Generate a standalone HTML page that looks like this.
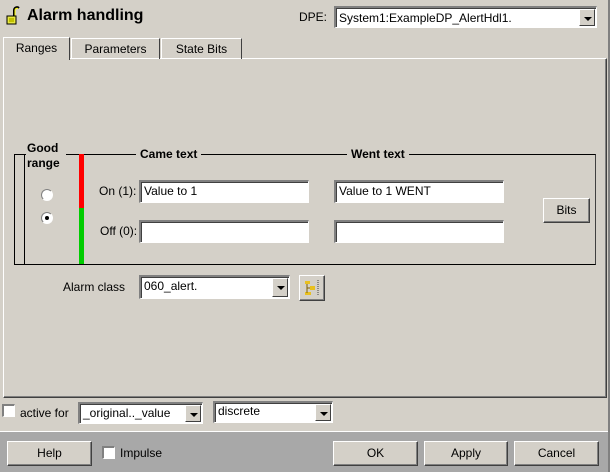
<!DOCTYPE html>
<html><head><style>
*{box-sizing:border-box}
body{margin:0;width:610px;height:472px;background:#d4d0c8;font-family:"Liberation Sans",sans-serif;font-size:12px;position:relative;overflow:hidden;color:#000}
.a{position:absolute}
.sunk{position:absolute;background:#fff;border-top:2px solid #808080;border-left:2px solid #808080;border-right:1px solid #fff;border-bottom:1px solid #fff;box-shadow:inset 1px 1px 0 #404040;padding:2px 3px;white-space:nowrap;overflow:hidden;font-size:12px}
.btn{position:absolute;background:#d4d0c8;border:1px solid;border-color:#fff #404040 #404040 #fff;box-shadow:inset -1px -1px 0 #808080;text-align:center;font-size:12px}
.arr{position:absolute;right:1px;top:1px;bottom:1px;width:16px;background:#d4d0c8;border:1px solid;border-color:#fff #404040 #404040 #fff}
.arr:after{content:"";position:absolute;left:4px;top:7px;border-left:4px solid transparent;border-right:4px solid transparent;border-top:4px solid #000}
.chk{position:absolute;width:13px;height:13px;background:#fff;border-top:2px solid #808080;border-left:2px solid #808080;border-right:1px solid #fff;border-bottom:1px solid #fff}
.tab{position:absolute;top:38px;height:21px;border:1px solid;border-color:#fff #404040 transparent #fff;border-bottom:none;text-align:center;line-height:20px;font-size:12px}
.b{font-weight:bold}
</style></head><body>
<div class="a" style="left:0;top:0;width:610px;height:472px;border-right:2px solid #808080"></div>
<svg class="a" style="left:6px;top:5px" width="14" height="21" viewBox="0 0 14 21"><path d="M8 11V5a3 3 0 0 1 5 -2" fill="none" stroke="#000" stroke-width="2"/><path d="M9 11V5a2 2 0 0 1 3 -1.5" fill="none" stroke="#ff0" stroke-width="1"/><rect x="1" y="11" width="9" height="8" fill="#e8e840" stroke="#000"/><rect x="3" y="13" width="5" height="4" fill="#c0c000"/></svg>
<div class="a b" style="left:27px;top:7px;font-size:16px">Alarm handling</div>
<div class="a" style="left:299px;top:10px">DPE:</div>
<div class="sunk" style="left:334px;top:6px;width:263px;height:22px;padding-top:3px">System1:ExampleDP_AlertHdl1.<div class="arr"></div></div>

<div class="a" style="left:3px;top:58px;width:604px;height:340px;border:1px solid;border-color:#fff #404040 #404040 #fff;box-shadow:inset -1px -1px 0 #808080"></div>
<div class="tab" style="left:3px;width:67px;top:37px;height:23px;background:#d4d0c8;z-index:2">Ranges</div>
<div class="tab" style="left:71px;width:89px">Parameters</div>
<div class="tab" style="left:161px;width:81px">State Bits</div>

<div class="a" style="left:14px;top:154px;width:582px;height:111px;border:1px solid #000;border-right-color:#404040"></div>
<div class="a b" style="left:26px;top:141px;width:40px;background:#d4d0c8;line-height:15px;padding-left:1px">Good<br>range</div>
<div class="a" style="left:24px;top:154px;width:1px;height:110px;background:#000"></div>
<div class="a" style="left:79px;top:154px;width:5px;height:54px;background:#f00"></div>
<div class="a" style="left:79px;top:208px;width:5px;height:56px;background:#0c0"></div>
<div class="a b" style="left:136px;top:147px;padding:0 4px;background:#d4d0c8">Came text</div>
<div class="a b" style="left:347px;top:147px;padding:0 4px;background:#d4d0c8">Went text</div>
<div class="a" style="left:41px;top:189px;width:12px;height:12px;border-radius:50%;background:#fff;border:1px solid;border-color:#808080 #fff #fff #808080"></div>
<div class="a" style="left:41px;top:212px;width:12px;height:12px;border-radius:50%;background:#fff;border:1px solid;border-color:#808080 #fff #fff #808080"><div class="a" style="left:3px;top:3px;width:4px;height:4px;border-radius:50%;background:#000"></div></div>
<div class="a" style="left:99px;top:184px">On (1):</div>
<div class="a" style="left:100px;top:224px">Off (0):</div>
<div class="sunk" style="left:139px;top:180px;width:170px;height:23px">Value to 1</div>
<div class="sunk" style="left:139px;top:220px;width:170px;height:23px"></div>
<div class="sunk" style="left:334px;top:180px;width:170px;height:23px">Value to 1 WENT</div>
<div class="sunk" style="left:334px;top:220px;width:170px;height:23px"></div>
<div class="btn" style="left:543px;top:198px;width:47px;height:25px;line-height:23px">Bits</div>

<div class="a" style="left:63px;top:280px">Alarm class</div>
<div class="sunk" style="left:139px;top:275px;width:151px;height:24px">060_alert.<div class="arr"></div></div>
<div class="btn" style="left:299px;top:275px;width:26px;height:26px"><svg width="22" height="22" style="position:absolute;left:1px;top:1px"><rect x="4" y="4" width="5" height="3" fill="#e8c020"/><rect x="9" y="9" width="5" height="4" fill="#e8c020"/><rect x="4" y="15" width="6" height="3" fill="#e8c020"/><path d="M6 7V16M6 11H9" stroke="#806000"/><path d="M17 3v16" stroke="#404040" stroke-dasharray="1 1"/></svg></div>

<div class="chk" style="left:2px;top:404px"></div>
<div class="a" style="left:20px;top:406px">active for</div>
<div class="sunk" style="left:78px;top:402px;width:125px;height:22px">_original.._value<div class="arr"></div></div>
<div class="sunk" style="left:213px;top:401px;width:120px;height:22px;padding-top:1px">discrete<div class="arr"></div></div>

<div class="a" style="left:0;top:431px;width:608px;height:41px;background:#a8a8a8;border-top:1px solid #fff"></div>
<div class="btn" style="left:7px;top:441px;width:85px;height:25px;line-height:23px">Help</div>
<div class="chk" style="left:102px;top:446px"></div>
<div class="a" style="left:120px;top:446px">Impulse</div>
<div class="btn" style="left:333px;top:441px;width:85px;height:25px;line-height:23px">OK</div>
<div class="btn" style="left:424px;top:441px;width:84px;height:25px;line-height:23px">Apply</div>
<div class="btn" style="left:514px;top:441px;width:85px;height:25px;line-height:23px">Cancel</div>
</body></html>
